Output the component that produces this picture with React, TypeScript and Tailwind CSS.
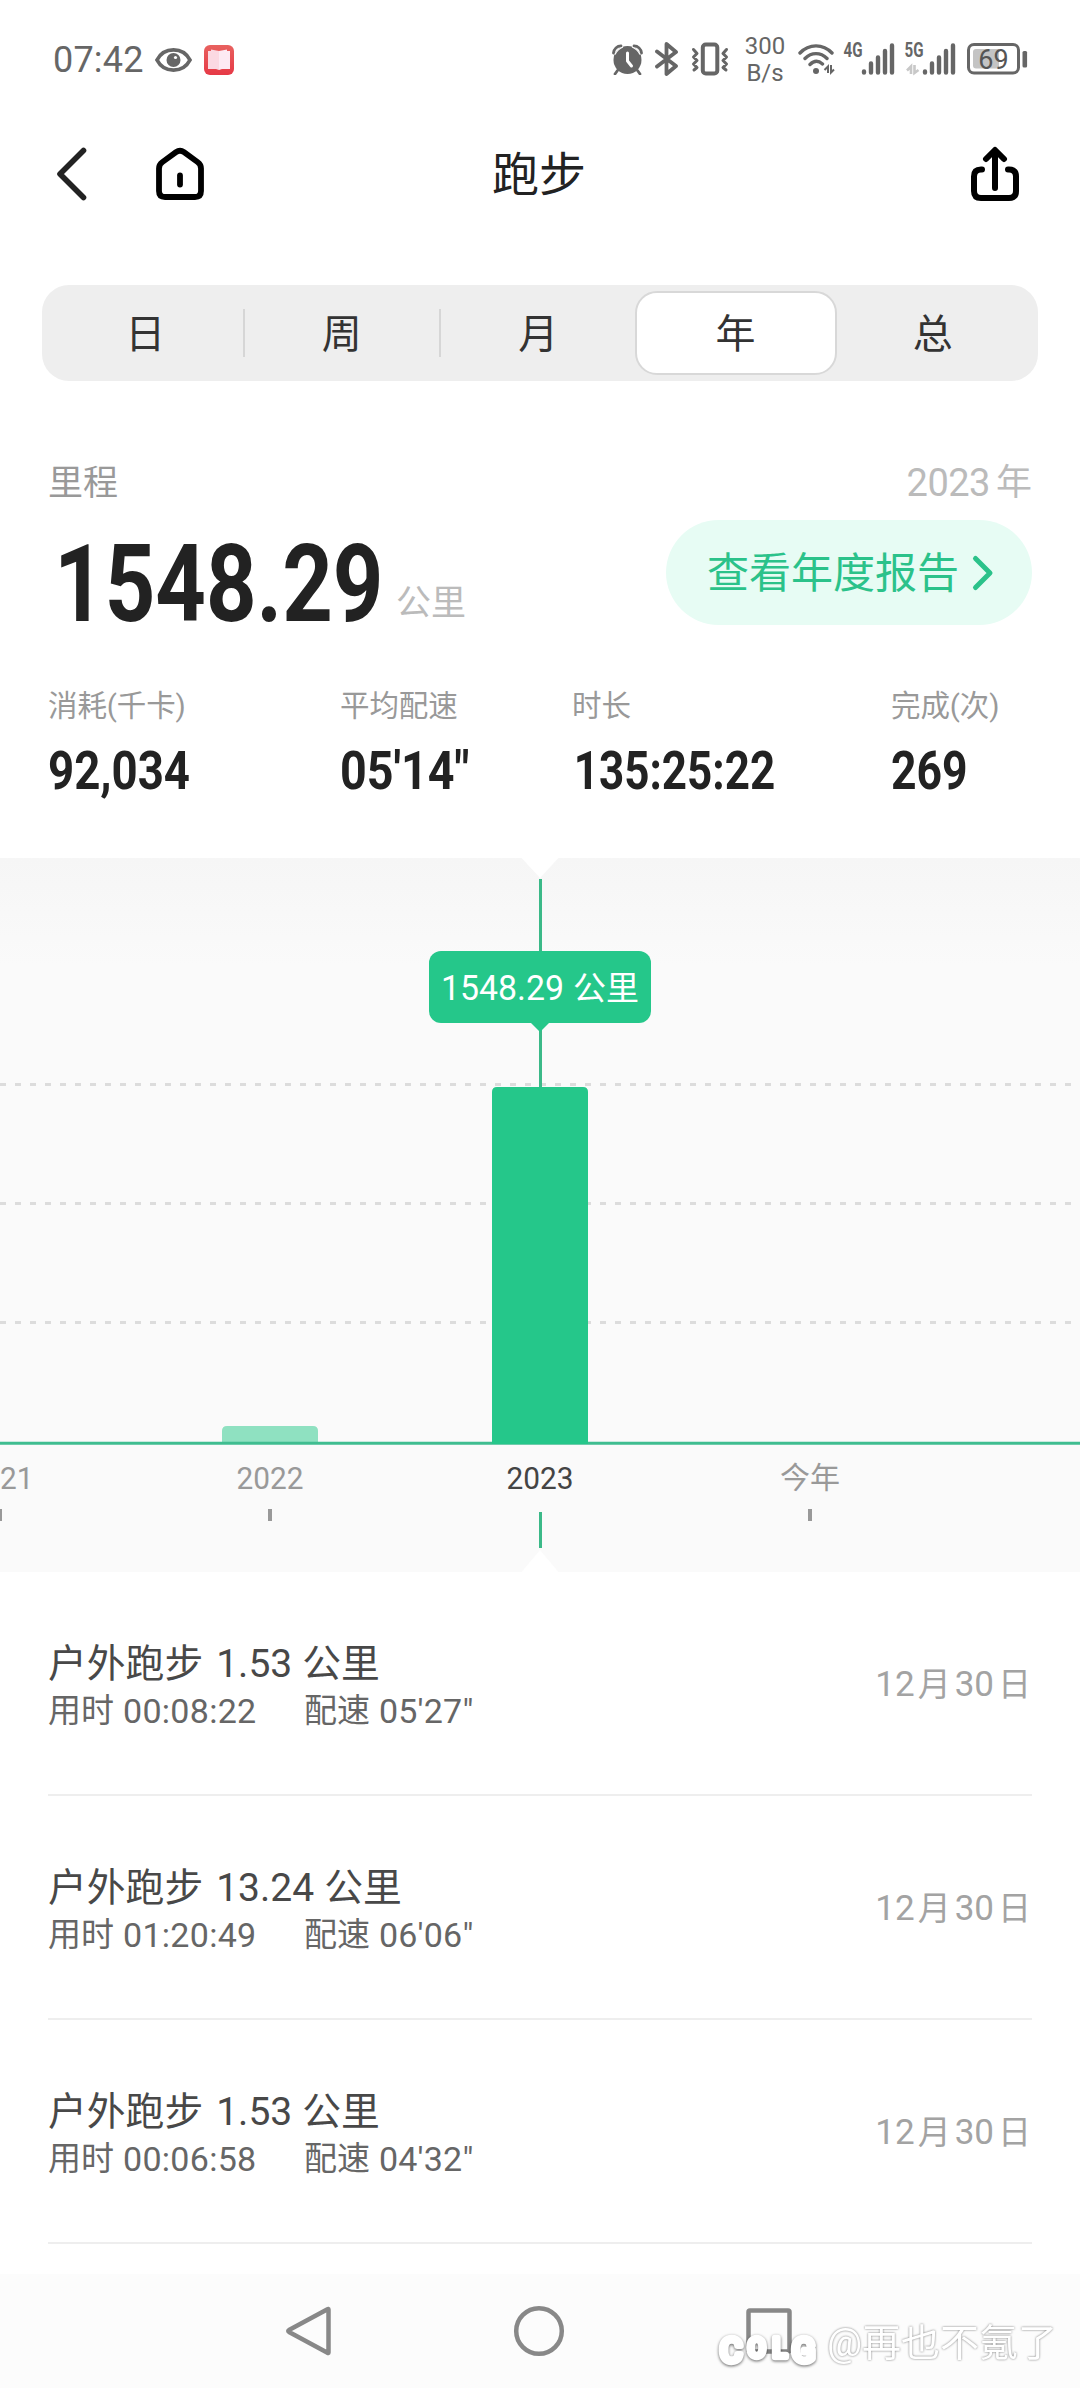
import React, { useState } from 'react';

interface Run {
  id: number;
  distance: string;
  time: string;
  pace: string;
  day: [string, string];
}

interface YearBar {
  label: string;
  x: number;
  top: number | null;
  width: number;
}

const TABS = ['日', '周', '月', '年', '总'];

const STATS = [
  { label: '消耗(千卡)', value: '92,034', col: 'w-[292px]', scale: 'scale-x-[0.86]' },
  { label: '平均配速', value: '05\'14"', col: 'w-[232px]', scale: 'scale-x-[0.88]' },
  { label: '时长', value: '135:25:22', col: 'w-[319px]', scale: 'scale-x-[0.83] pl-[2px]' },
  { label: '完成(次)', value: '269', col: 'w-[140px]', scale: 'scale-x-[0.84]' },
];

const RUNS: Run[] = [
  { id: 1, distance: '1.53', time: '00:08:22', pace: '05\'27"', day: ['12', '30'] },
  { id: 2, distance: '13.24', time: '01:20:49', pace: '06\'06"', day: ['12', '30'] },
  { id: 3, distance: '1.53', time: '00:06:58', pace: '04\'32"', day: ['12', '30'] },
];

const YEARS: YearBar[] = [
  { label: '2021', x: 0, top: null, width: 67 },
  { label: '2022', x: 270, top: 568, width: 67 },
  { label: '2023', x: 540, top: 229, width: 67 },
  { label: '今年', x: 810, top: null, width: 60 },
];

const SignalBars: React.FC = () => (
  <g strokeWidth="4.4" strokeLinecap="round" className="stroke-[#666]">
    <path d="M20 29.500v-1M27 29.500V20.500M34 29.500V14.500M41 29.500V8M48 29.500V2.500" />
  </g>
);

const StatusBar: React.FC = () => (
  <div className="flex h-[118px] items-center pl-[53px] text-[#666]">
    <span className="w-[102px] pt-[2px] text-[36px] leading-none tracking-[0.2px]">07:42</span>
    <svg width="37" height="26" viewBox="0 0 37 26" fill="none" className="mt-[2px]">
      <path d="M2 13C9-.5 28-.5 35 13 28 26.500 9 26.500 2 13Z" stroke="#666" strokeWidth="3.800" />
      <circle cx="18.500" cy="13" r="7" fill="#666" />
      <circle cx="20.500" cy="10.500" r="1.600" fill="#fff" />
    </svg>
    <svg width="30" height="30" viewBox="0 0 30 30" className="ml-[12px] mt-[2px]">
      <defs>
        <linearGradient id="book" x1="0" y1="0" x2="0" y2="1">
          <stop offset="0" stopColor="#e8615f" />
          <stop offset="1" stopColor="#e63946" />
        </linearGradient>
      </defs>
      <rect width="30" height="30" rx="6" fill="url(#book)" />
      <path d="M4 6h3V4.500l8 1.500v19l-3-1H4Z" fill="#fbd9e2" />
      <path d="M26 6h-3V4.500L15 6v19l3-1h8Z" fill="#fdeaf3" />
    </svg>

    <div className="ml-[378px] flex items-center">
      <svg width="31" height="31" viewBox="0 0 31 31" fill="none">
        <circle cx="15.500" cy="16" r="14" fill="#666" />
        <path d="M1.500 9C2 5 5 2 9 2M29.500 9C29 5 26 2 22 2M5.500 26.500L3 30M25.500 26.500l2.500 3.500" stroke="#666" strokeWidth="2.800" strokeLinecap="round" />
        <path d="M3 10.500C5 6.500 8 4.200 11 3M28 10.500C26 6.500 23 4.200 20 3" stroke="#fff" strokeWidth="1.200" />
        <path d="M15.500 9v8l4 5" stroke="#fff" strokeWidth="3" strokeLinecap="round" strokeLinejoin="round" />
      </svg>
      <svg width="24" height="34" viewBox="0 0 24 34" fill="none" className="ml-[12px]">
        <path d="M2 9.500l19 14.500-9.500 8V2l9.500 8L2 24.500" stroke="#666" strokeWidth="3.800" strokeLinecap="round" strokeLinejoin="round" />
      </svg>
      <svg width="38" height="34" viewBox="0 0 38 34" fill="none" className="ml-[12px]">
        <rect x="11.800" y="2.500" width="14.500" height="29" rx="3" stroke="#666" strokeWidth="4" />
        <path d="M2.500 7.500l3.500 4-3.500 3.500L6 18.500 2.500 22 6 25.500 3 28M35.500 7.500L32 11.500l3.500 3.500-3.500 3.500 3.500 3.500-3.500 3.500 3 2.500" stroke="#666" strokeWidth="3" strokeLinecap="round" strokeLinejoin="round" />
      </svg>
      <div className="ml-[12px] flex w-[48px] flex-col items-center pt-[2px] text-[24px] leading-[27px]">
        <span>300</span>
        <span>B/s</span>
      </div>
      <svg width="38" height="32" viewBox="0 0 38 32" fill="none" className="ml-[9px]">
        <path d="M2 10C11 .5 25 .5 34 10M7 15.500c6.500-6.500 15.500-6.500 22 0M12 21.500c4-4 8.500-4 12.500-.5" stroke="#666" strokeWidth="3.400" strokeLinecap="round" />
        <circle cx="18" cy="28" r="3" fill="#666" />
        <path d="M30 30V23.500l-3.500 3.500M33 22v7.500l3-3" stroke="#666" strokeWidth="2" />
      </svg>
      <svg width="50" height="32" viewBox="0 0 50 32" className="ml-[8px] overflow-visible">
        <text x="-0.500" y="14" fontSize="20" textLength="19" lengthAdjust="spacingAndGlyphs" className="fill-[#666] font-bold">4G</text>
        <SignalBars />
      </svg>
      <svg width="50" height="32" viewBox="0 0 50 32" className="ml-[11px] overflow-visible">
        <text x="-0.500" y="14" fontSize="20" textLength="19" lengthAdjust="spacingAndGlyphs" className="fill-[#666] font-bold">5G</text>
        <path d="M6 31V23.500l-4 4M9.500 22v8l4-3" fill="none" stroke="#c8c8c8" strokeWidth="2.600" />
        <SignalBars />
      </svg>
      <svg width="62" height="32" viewBox="0 0 62 32" className="ml-[12px]">
        <rect x="1.500" y="1.500" width="50" height="28.500" rx="5.500" fill="none" stroke="#666" strokeWidth="3" />
        <path d="M9 6h23v19.500H9q-3 0-3-3V9q0-3 3-3Z" fill="#c4c4c4" />
        <rect x="55.500" y="8" width="4.600" height="16.500" rx="1.500" fill="#666" />
        <text x="26.500" y="25.500" fontSize="27" textAnchor="middle" className="fill-[#555]">69</text>
      </svg>
    </div>
  </div>
);

const Header: React.FC = () => (
  <div className="flex h-[112px] items-center justify-between pl-[54px] pr-[59px]">
    <div className="flex w-[200px] items-center">
      <svg width="34" height="56" viewBox="0 0 34 56" fill="none">
        <path d="M29.500 4.500L6 28l23.500 23.500" stroke="#222" strokeWidth="5.600" strokeLinecap="round" strokeLinejoin="round" />
      </svg>
      <svg width="52" height="56" viewBox="0 0 52 56" fill="none" className="ml-[66px]">
        <path d="M5 22.500q0-4 3.500-6.500L22 6.200q4-2.800 8 0L43.500 16q3.500 2.500 3.500 6.500V45q0 6-6 6H11q-6 0-6-6Z" stroke="#000" strokeWidth="5.800" strokeLinejoin="round" />
        <path d="M26 29.500v9" stroke="#000" strokeWidth="5.800" strokeLinecap="round" />
      </svg>
    </div>
    <h1 className="pl-[3px] text-[47px] leading-none text-[#222]">跑步</h1>
    <div className="flex w-[200px] justify-end">
      <svg width="52" height="58" viewBox="0 0 52 58" fill="none">
        <path d="M13 24.500h-1q-7 0-7 7V46q0 7 7 7h28q7 0 7-7V31.500q0-7-7-7h-1M26 43V6.500M17 14l9-9 9 9" stroke="#000" strokeWidth="6" strokeLinecap="round" strokeLinejoin="round" />
      </svg>
    </div>
  </div>
);

const YearChart: React.FC = () => (
  <svg width="1080" height="714" viewBox="0 0 1080 714" className="block">
    <defs>
      <linearGradient id="chartBg" x1="0" y1="0" x2="0" y2="1">
        <stop offset="0" stopColor="#f6f6f6" />
        <stop offset="0.150" stopColor="#fafafa" />
      </linearGradient>
    </defs>
    <rect width="1080" height="714" fill="url(#chartBg)" />
    <path d="M521.500 0h37L540 20ZM521.500 714h37L540 692Z" fill="#fff" />
    {[226.5, 345.5, 464.5].map((y) => (
      <path key={y} d={`M0 ${y}H1080`} stroke="#dcdcdc" strokeWidth="3" strokeDasharray="6 9" />
    ))}
    <path d="M540.500 21V229M540.500 654v36" stroke="#3bb988" strokeWidth="3" />
    {YEARS.map((year) => {
      const active = year.label === '2023';
      return (
        <g key={year.label}>
          {year.top !== null && (
            <path
              d={`M${year.x - 48} 585V${year.top + 5}q0-5 5-5h86q5 0 5 5V585Z`}
              fill={active ? '#25c78a' : '#8fe1c1'}
            />
          )}
          <text
            x={year.x - year.width / 2}
            y={year.label === '今年' ? 630 : 631}
            fontSize={year.label === '今年' ? 30 : 31}
            textLength={year.width}
            lengthAdjust="spacingAndGlyphs"
            className={active ? 'fill-[#444]' : 'fill-[#999]'}
          >
            {year.label}
          </text>
          {!active && <rect x={year.x - 2} y="651" width="4" height="12" fill="#999" />}
        </g>
      );
    })}
    <path d="M0 585.300H1080" stroke="#3fbd90" strokeWidth="3" />
    <rect x="492" y="580" width="96" height="6" fill="#25c78a" />
    <rect x="429" y="93" width="222" height="72" rx="12" fill="#25c78a" />
    <path d="M531 165h18l-9 9Z" fill="#25c78a" />
    <text x="441" y="142" fontSize="35" textLength="123" lengthAdjust="spacingAndGlyphs" className="fill-white">1548.29</text>
    <text x="573" y="142" fontSize="33" textLength="66" lengthAdjust="spacingAndGlyphs" className="fill-white">公里</text>
  </svg>
);

const RunRow: React.FC<{ run: Run }> = ({ run }) => (
  <div className="mx-[48px] flex h-[224px] items-center justify-between border-b-2 border-[#eee]">
    <div className="mt-[9px]">
      <div className="flex h-[46px] items-center text-[38.800px] leading-none text-[#484848]">
        <span>户外跑步</span>
        <span className="ml-[13px] text-[39px]">{run.distance}</span>
        <span className="ml-[10px]">公里</span>
      </div>
      <div className="flex h-[46px] items-center text-[33px] leading-none text-[#666]">
        <span className="w-[75px]">用时</span>
        <span className="w-[181px] text-[34px] tracking-[0.3px]">{run.time}</span>
        <span className="w-[75px]">配速</span>
        <span className="text-[34px] tracking-[0.2px]">{run.pace}</span>
      </div>
    </div>
    <div className="flex items-center pr-px pt-[3px] text-[33px] leading-none text-[#a3a3a3]">
      <span className="text-[35px]">{run.day[0]}</span>
      <span className="ml-[3px] mr-[4px]">月</span>
      <span className="text-[35px]">{run.day[1]}</span>
      <span className="ml-[4px]">日</span>
    </div>
  </div>
);

const NavBar: React.FC = () => (
  <div className="relative mt-[30px] h-[114px] bg-[#fcfcfc]">
    <div className="flex h-full items-center justify-between pl-[283px] pr-[284px]">
      <svg width="52" height="54" viewBox="0 0 52 54" fill="none">
        <path d="M45.500 5.500v43q0 1-1 .3L6 28q-1.500-1 0-2L44.500 5.200q1-.7 1 .3Z" stroke="#888" strokeWidth="4.500" strokeLinejoin="round" />
      </svg>
      <svg width="54" height="54" viewBox="0 0 54 54" fill="none">
        <circle cx="27" cy="27" r="22.800" stroke="#888" strokeWidth="4.500" />
      </svg>
      <svg width="54" height="54" viewBox="0 0 54 54" fill="none">
        <rect x="6.500" y="6.500" width="41" height="41" rx="1.500" stroke="#888" strokeWidth="4.500" />
      </svg>
    </div>
    <div className="absolute left-[714px] top-[40px]">
      <svg width="366" height="64" viewBox="0 0 366 64" className="overflow-visible">
        <g className="fill-white stroke-white drop-shadow-[0_1px_1.500px_rgba(0,0,0,0.600)]" strokeWidth="6.500" strokeLinejoin="round">
          <text x="6" y="47.500" fontSize="34">C</text>
          <text x="34" y="43" fontSize="25">O</text>
          <text x="59" y="43" fontSize="25">L</text>
          <text x="78" y="47.500" fontSize="34">G</text>
        </g>
        <text x="113" y="42" fontSize="38" textLength="230" lengthAdjust="spacingAndGlyphs" className="fill-white drop-shadow-[0_0_1px_rgba(0,0,0,0.500)]">@再也不氪了</text>
      </svg>
    </div>
  </div>
);

export default function App() {
  const [tab, setTab] = useState('年');

  return (
    <div className="h-[2388px] w-[1080px] overflow-hidden bg-white font-[Roboto,'Noto_Sans_CJK_SC',sans-serif]">
      <StatusBar />
      <Header />

      <div className="mx-[42px] mt-[55px] flex h-[96px] items-center rounded-[27px] bg-[#eee] pl-[5px] pr-[7px]">
        {TABS.map((name, i) => (
          <React.Fragment key={name}>
            {(i === 1 || i === 2) && <span className="-mx-px h-[48px] w-[2px] bg-[#d6d6d6]" />}
            <button
              onClick={() => setTab(name)}
              className={
                tab === name
                  ? '-mx-[2px] h-[84px] w-[202px] shrink-0 rounded-[22px] border-2 border-[#d8d8d8] bg-white pt-[3px] text-[40px] leading-none text-[#333]'
                  : 'h-[84px] flex-1 pt-[3px] text-[40px] leading-none text-[#333]'
              }
            >
              {name}
            </button>
          </React.Fragment>
        ))}
      </div>

      <div className="mt-[76px] flex h-[50px] items-center justify-between px-[48px] pt-[2px] text-[35px] leading-none">
        <span className="text-[#999]">里程</span>
        <span className="flex items-center text-[#bbb]">
          <span className="text-[38px] tracking-[-0.5px]">2023</span>
          <span className="ml-[6px] text-[36px]">年</span>
        </span>
      </div>

      <div className="mt-[13px] flex h-[105px] items-center justify-between px-[48px]">
        <div className="flex items-baseline pt-[23px]">
          <span className="w-[348px] pl-[6px] text-[107px] font-bold leading-[105px] text-[#222]">
            <span className="inline-block origin-left scale-x-[0.825]">1548.29</span>
          </span>
          <span className="-translate-y-[6px] text-[35px] leading-none text-[#bbb]">公里</span>
        </div>
        <button className="flex h-[105px] w-[366px] items-center rounded-full bg-[#e7fcf4] pl-[41px] text-[42px] leading-none text-[#2bc28a]">
          <span className="pt-[3px]">查看年度报告</span>
          <svg width="26" height="40" viewBox="0 0 26 40" fill="none" className="ml-[11px]">
            <path d="M5.500 5.500L20 20 5.500 34.500" stroke="#2bc28a" strokeWidth="5" strokeLinecap="round" strokeLinejoin="round" />
          </svg>
        </button>
      </div>

      <div className="mt-[61px] flex px-[48px]">
        {STATS.map((stat) => (
          <div key={stat.label} className={stat.col}>
            <div className="flex h-[40px] items-center pt-[2px] text-[29.500px] leading-none tracking-[-0.1px] text-[#999]">{stat.label}</div>
            <div className="mt-[19px] flex h-[50px] items-center pt-[2px] text-[53px] font-bold leading-none text-[#222]">
              <span className={`inline-block origin-left ${stat.scale}`}>{stat.value}</span>
            </div>
          </div>
        ))}
      </div>

      <div className="mt-[63px]">
        <YearChart />
      </div>

      {RUNS.map((run) => (
        <RunRow key={run.id} run={run} />
      ))}

      <NavBar />
    </div>
  );
}
